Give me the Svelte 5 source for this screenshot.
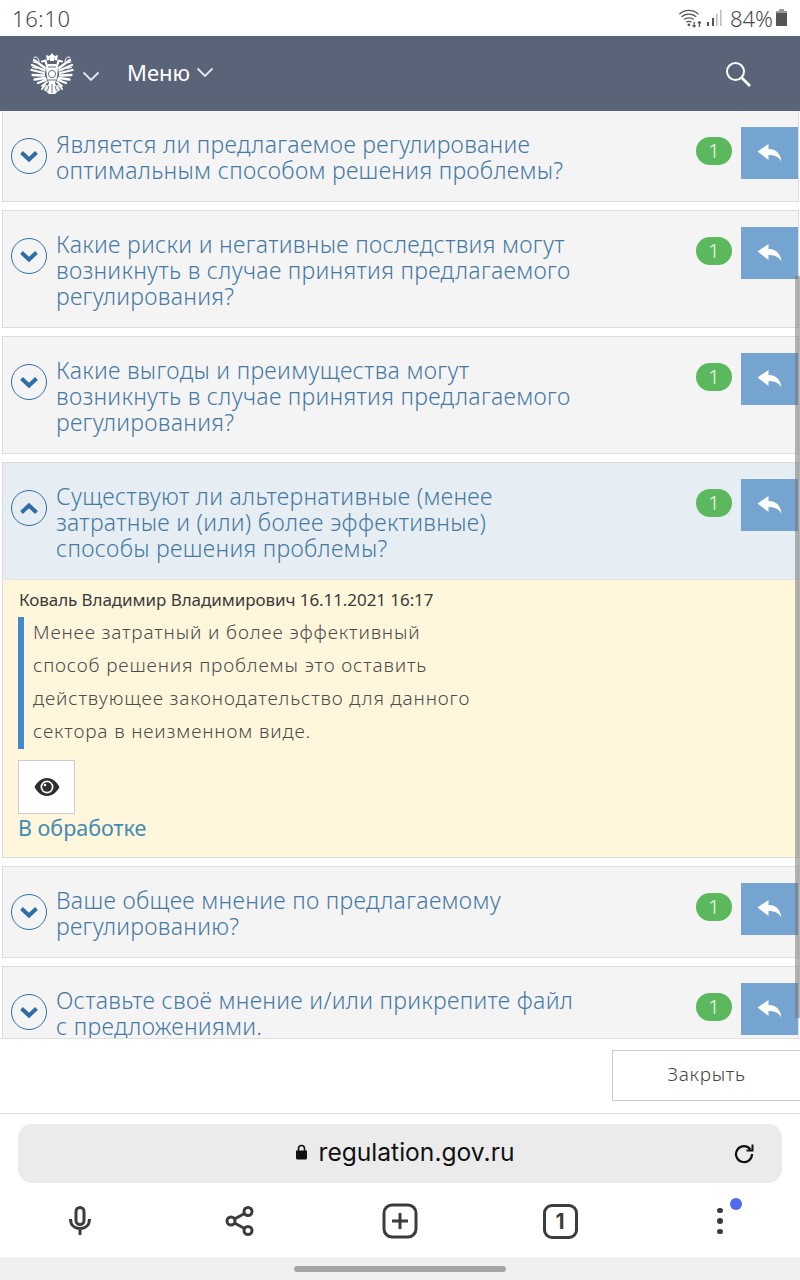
<script>
  const before = [
    { lines: ['Является ли предлагаемое регулирование', 'оптимальным способом решения проблемы?'], first: true },
    { lines: ['Какие риски и негативные последствия могут', 'возникнуть в случае принятия предлагаемого', 'регулирования?'] },
    { lines: ['Какие выгоды и преимущества могут', 'возникнуть в случае принятия предлагаемого', 'регулирования?'] }
  ];
  const after = [
    { lines: ['Ваше общее мнение по предлагаемому', 'регулированию?'] },
    { lines: ['Оставьте своё мнение и/или прикрепите файл', 'с предложениями.'] }
  ];
</script>

{#snippet replyBtn()}
  <div class="side">
    <span class="badge">1</span>
    <span class="reply">
      <svg width="25" height="20" viewBox="0 0 25 20"><path d="M0.500 8.500 11.500 1v5C19 6 23.500 10.500 24.500 18.500 22 14 17.500 12 11.500 12v5z" fill="#fff"/></svg>
    </span>
  </div>
{/snippet}

{#snippet head(q, open)}
  <div class="head" class:open>
    <span class="toggle">
      <svg width="18" height="13" viewBox="0 0 18 13">
        <path d={open ? 'M1.500 10.500 9 3.500l7.500 7' : 'M1.500 2.500 9 9.500l7.500-7'} fill="none" stroke="#2f6da4" stroke-width="4"/>
      </svg>
    </span>
    <h3>{#each q.lines as l}<span>{l}</span>{/each}</h3>
    {@render replyBtn()}
  </div>
{/snippet}

{#snippet wing()}
  <g fill="none" stroke="#fff" stroke-linecap="round">
    <!-- feathers -->
    <path stroke-width="2.300" d="M15 15 4 7M14.500 17.500 2 12M14 20 1.500 17M14 22.500 2.500 22M15 25 4.500 26.500M16 27 8 30"/>
    <path stroke-width="1" d="M4 4.500C7 2.500 9 6 9 9M3 9l5 1M2.500 14.500l4 1"/>
    <!-- neck and head -->
    <path stroke-width="2.200" d="M20 18C17.500 14 16 11 15.500 8"/>
    <path stroke-width="2" d="M15.500 7.500 12 8.500"/>
    <!-- leg and sceptre -->
    <path stroke-width="1.800" d="M17 29 12 33M15 32l-3 4M17 33l-2 4"/>
  </g>
{/snippet}

<div class="phone">
  <div class="status">
    <span class="time">16:10</span>
    <div class="status-right">
      <svg width="26" height="19" viewBox="0 0 24 18" fill="none" stroke="#555" stroke-width="1.200">
        <path d="M1 5c5-5 13-5 18 0M3 7.500c3.500-3.500 10.500-3.500 14 0M5.500 10c2-2 7-2 9 0M7.500 12.500c1-1 4-1 5 0"/>
        <circle cx="10" cy="15" r="1.300" fill="#555" stroke="none"/>
        <path d="M15 12v5M13.500 15.500l1.500 1.500 1.500-1.500M20 17v-5M18.500 13.500l1.500-1.500 1.500 1.500"/>
      </svg>
      <svg width="17" height="18" viewBox="0 0 17 18">
        <rect x="1" y="13" width="2" height="4" fill="#555"/>
        <rect x="6" y="9" width="2" height="8" fill="#555"/>
        <rect x="10" y="5" width="1.500" height="12" fill="#bbb"/>
        <rect x="14" y="1" width="1.500" height="16" fill="#bbb"/>
      </svg>
      <span class="pct">84%</span>
      <svg class="batt" width="13" height="18" viewBox="0 0 13 18">
        <rect x="4" y="0" width="5" height="3" fill="#999"/>
        <rect x="1" y="2" width="11" height="3" fill="#999"/>
        <rect x="1" y="4" width="11" height="13" fill="#555"/>
      </svg>
    </div>
  </div>

  <header>
    <svg class="eagle" width="44" height="42" viewBox="0 0 44 42">
      {@render wing()}
      <g transform="translate(44 0) scale(-1 1)">{@render wing()}</g>
      <g fill="#fff">
        <!-- crown -->
        <path d="M22 0l1.500 2 1.500 1-1 5h-4l-1-5 1.500-1z"/>
        <path d="M16 2l3 1 .5 4-2.500.5zM28 2l-3 1-.5 4 2.500.5z"/>
        <!-- body -->
        <path d="M18 11h8l2 4-1 10-2 5h-6l-2-5-1-10z"/>
        <!-- tail -->
        <path d="M19 30h6l3 8-3 3h-6l-3-3z"/>
      </g>
      <g fill="none" stroke="#5a6478" stroke-width="0.900">
        <circle cx="22" cy="21" r="3.600"/>
        <path d="M18 14h8M17.500 27h9M22 31v9M19 33l-1.500 5M25 33l1.500 5"/>
      </g>
    </svg>
    <svg class="first-chev" width="18" height="11" viewBox="0 0 18 11"><path d="M1.500 1.500 9 9l7.500-7.500" fill="none" stroke="#e6e8ec" stroke-width="1.800"/></svg>
    <span class="menu">Меню</span>
    <svg class="second-chev" width="18" height="11" viewBox="0 0 18 11"><path d="M1.500 1.500 9 9l7.500-7.500" fill="none" stroke="#e6e8ec" stroke-width="1.800"/></svg>
    <svg class="search" width="28" height="28" viewBox="0 0 28 28" fill="none" stroke="#fff">
      <circle cx="11.500" cy="11.500" r="8.500" stroke-width="2"/>
      <path d="M18 18l8 8" stroke-width="2.600"/>
    </svg>
  </header>

  <main>
    <div class="scrollbar"></div>
    {#each before as q}
      <section class="panel" class:first={q.first}>{@render head(q, false)}</section>
    {/each}

    <section class="panel">
      {@render head({ lines: ['Существуют ли альтернативные (менее', 'затратные и (или) более эффективные)', 'способы решения проблемы?'] }, true)}
      <div class="body">
        <p class="author">Коваль Владимир Владимирович 16.11.2021 16:17</p>
        <blockquote>
          <span>Менее затратный и более эффективный</span>
          <span>способ решения проблемы это оставить</span>
          <span>действующее законодательство для данного</span>
          <span>сектора в неизменном виде.</span>
        </blockquote>
        <div class="eye">
          <svg width="26" height="20" viewBox="0 0 26 20">
            <path fill-rule="evenodd" d="M13 1c5.500 0 10 4 12.500 9C23 15 18.500 19 13 19S3 15 .5 10C3 5 7.500 1 13 1zm0 2.500a6.500 6.500 0 1 0 0 13 6.500 6.500 0 0 0 0-13z" fill="#2e2e2e"/>
            <circle cx="13" cy="10" r="4.800" fill="#2e2e2e"/>
            <circle cx="11" cy="8" r="1.300" fill="#fff"/>
          </svg>
        </div>
        <div class="state">В обработке</div>
      </div>
    </section>

    {#each after as q}
      <section class="panel">{@render head(q, false)}</section>
    {/each}
  </main>

  <div class="modal-foot">
    <button>Закрыть</button>
  </div>

  <div class="browser">
    <div class="url">
      <svg class="lock" width="13" height="16" viewBox="0 0 13 16">
        <path d="M1 6.500h11V14a1.500 1.500 0 0 1-1.500 1.500h-8A1.500 1.500 0 0 1 1 14z" fill="#111"/>
        <path d="M3.500 7V4.500a3 3 0 0 1 6 0V7" fill="none" stroke="#111" stroke-width="1.600"/>
      </svg>
      <span class="host">regulation.gov.ru</span>
      <svg class="reload" width="22" height="22" viewBox="0 0 22 22" fill="none" stroke="#111" stroke-width="2.200">
        <path d="M17.500 7.500A8 8 0 1 0 19 12"/>
        <path d="M19.500 2.500v6h-6" stroke-width="2"/>
      </svg>
    </div>
    <nav>
      <svg width="24" height="32" viewBox="0 0 24 32" fill="none" stroke="#3c3c3c" stroke-width="3">
        <rect x="8" y="2.500" width="8" height="17" rx="4"/>
        <path d="M2.500 14c0 6 4 9.500 9.500 9.500s9.500-3.500 9.500-9.500M12 23.500V30"/>
      </svg>
      <svg width="30" height="32" viewBox="0 0 30 32" fill="none" stroke="#3c3c3c" stroke-width="3">
        <circle cx="6" cy="16" r="4"/><circle cx="23" cy="6.500" r="4"/><circle cx="23" cy="25.500" r="4"/>
        <path d="M9.500 14 19.500 8.500M9.500 18l10 5.500"/>
      </svg>
      <svg width="36" height="36" viewBox="0 0 36 36" fill="none" stroke="#3c3c3c" stroke-width="3">
        <rect x="2" y="2" width="32" height="32" rx="8"/>
        <path d="M18 10v16M10 18h16"/>
      </svg>
      <div class="tabs">1</div>
      <div class="more">
        <i></i><i></i><i></i>
        <b></b>
      </div>
    </nav>
  </div>

  <div class="gesture"><span></span></div>
</div>

<style>
  :global(body) {
    background: #fff;
  }

  .phone {
    width: 800px;
    height: 1280px;
    display: flex;
    flex-direction: column;
    overflow: hidden;
    font-family: "Noto Sans", sans-serif;
  }

  .status {
    height: 36px;
    flex: none;
    display: flex;
    justify-content: space-between;
    align-items: center;
    padding: 0 12px 0 12px;
    color: #4a4a4a;
  }
  .time {
    font-size: 22px;
    font-weight: 300;
    letter-spacing: 0.6px;
  }
  .status-right {
    display: flex;
    align-items: center;
    gap: 2px;
  }
  .pct {
    font-size: 22px;
    font-weight: 300;
    margin-left: 5px;
  }

  header {
    height: 75px;
    flex: none;
    background: #5a6478;
    display: flex;
    align-items: center;
    padding-left: 30px;
    color: #fff;
  }
  .first-chev {
    margin: 6px 29px 0 8px;
  }
  .menu {
    font-size: 22px;
    margin: -4px 6px 0 -2px;
  }
  .second-chev {
    margin-top: -2px;
  }
  .search {
    margin-left: auto;
    margin-right: 48px;
  }

  main {
    flex: none;
    height: 927px;
    overflow: hidden;
    position: relative;
    padding: 0 1px 0 2px;
  }
  .scrollbar {
    position: absolute;
    right: 0;
    top: 165px;
    width: 5px;
    height: 742px;
    background: rgba(110, 110, 110, 0.5);
    z-index: 2;
  }

  .panel {
    background: #f4f4f5;
    border: 1px solid #dcdcdc;
    margin-bottom: 8px;
  }
  .panel.first {
    border-top: 0;
  }

  .head {
    display: flex;
    align-items: flex-start;
    padding: 20px 0 18px 8px;
    position: relative;
  }
  .head.open {
    background: #e6eef3;
    border-bottom: 1px solid #e3e3e3;
  }
  .toggle {
    width: 36px;
    height: 36px;
    flex: none;
    border: 1px solid #2f6da4;
    border-radius: 50%;
    display: flex;
    align-items: center;
    justify-content: center;
    margin-top: 7px;
    box-sizing: border-box;
  }
  h3 {
    margin: 0 0 0 9px;
    font-weight: 300;
    font-size: 23px;
    line-height: 26px;
    color: #467aa3;
    letter-spacing: 0.3px;
    display: flex;
    flex-direction: column;
    white-space: nowrap;
  }
  .side {
    position: absolute;
    right: 0;
    top: 16px;
    display: flex;
    align-items: flex-start;
  }
  .badge {
    width: 36px;
    height: 28px;
    margin-top: 10px;
    margin-right: 9px;
    border-radius: 14px;
    background: #5cb85c;
    color: #f4faf4;
    font-size: 20px;
    font-weight: 300;
    line-height: 27px;
    text-align: center;
  }
  .reply {
    width: 57px;
    height: 52px;
    background: #74a4cf;
    display: flex;
    align-items: center;
    justify-content: center;
  }

  .body {
    background: #fff6dc;
    padding: 7px 16px 15px 15px;
    height: 255px;
  }
  .author {
    margin: 0 0 0 1px;
    font-size: 17px;
    line-height: 26px;
    letter-spacing: -0.07px;
    color: #3b3b3b;
  }
  blockquote {
    margin: 4px 0 0;
    border-left: 6px solid #428bca;
    padding: 0 0 1px 9px;
    font-weight: 300;
    font-size: 19px;
    line-height: 33px;
    letter-spacing: 0.85px;
    color: #4c4c4c;
    display: flex;
    flex-direction: column;
  }
  blockquote span:first-child {
    margin-top: -1px;
  }
  .eye {
    width: 55px;
    height: 52px;
    margin-top: 11px;
    background: #fff;
    border: 1px solid #cccccc;
    display: flex;
    align-items: center;
    justify-content: center;
  }
  .state {
    margin: 0;
    font-size: 21.5px;
    line-height: 28px;
    color: #428bb5;
  }

  .modal-foot {
    height: 76px;
    flex: none;
    background: #fff;
    border-top: 1px solid #e0e0e0;
    border-bottom: 1px solid #dfdfdf;
    box-sizing: border-box;
    display: flex;
    justify-content: flex-end;
    align-items: flex-start;
    padding-top: 11px;
  }
  button {
    width: 188px;
    height: 51px;
    padding: 0 0 3px;
    background: #fff;
    border: 1px solid #cccccc;
    border-right: 0;
    font-family: "Noto Sans", sans-serif;
    font-weight: 300;
    font-size: 19px;
    letter-spacing: 0.7px;
    color: #444;
  }

  .browser {
    flex: none;
    height: 143px;
    background: #fff;
    padding: 10px 18px 0;
    box-sizing: border-box;
  }
  .url {
    height: 59px;
    background: #ebebeb;
    border-radius: 14px;
    display: flex;
    align-items: center;
    justify-content: center;
    gap: 11px;
    padding-left: 9px;
    box-sizing: border-box;
    position: relative;
    font-family: "Inter", sans-serif;
    font-size: 24.6px;
    color: #111;
  }
  .lock {
    margin-top: -3px;
  }
  .host {
    margin-top: -3px;
  }
  .reload {
    position: absolute;
    right: 27px;
    top: 18px;
  }
  nav {
    display: grid;
    grid-template-columns: repeat(5, 160px);
    margin: 19px -18px 0;
    justify-items: center;
    align-items: center;
    height: 38px;
  }
  .tabs {
    width: 29px;
    height: 29px;
    border: 3px solid #3c3c3c;
    border-radius: 9px;
    font-family: "Inter", sans-serif;
    font-weight: 700;
    font-size: 21px;
    line-height: 29px;
    text-align: center;
    color: #3c3c3c;
  }
  .more {
    position: relative;
    display: flex;
    flex-direction: column;
    gap: 5px;
  }
  .more i {
    width: 5.500px;
    height: 5.500px;
    border-radius: 50%;
    background: #3c3c3c;
  }
  .more b {
    position: absolute;
    left: 12.750px;
    top: -9.500px;
    width: 12px;
    height: 12px;
    border-radius: 50%;
    background: #4f69f0;
  }

  .gesture {
    height: 23px;
    flex: none;
    background: #f0f0f0;
    display: flex;
    justify-content: center;
    padding-top: 9px;
    box-sizing: border-box;
  }
  .gesture span {
    width: 212px;
    height: 6px;
    border-radius: 3px;
    background: #a5a5a5;
  }
</style>
